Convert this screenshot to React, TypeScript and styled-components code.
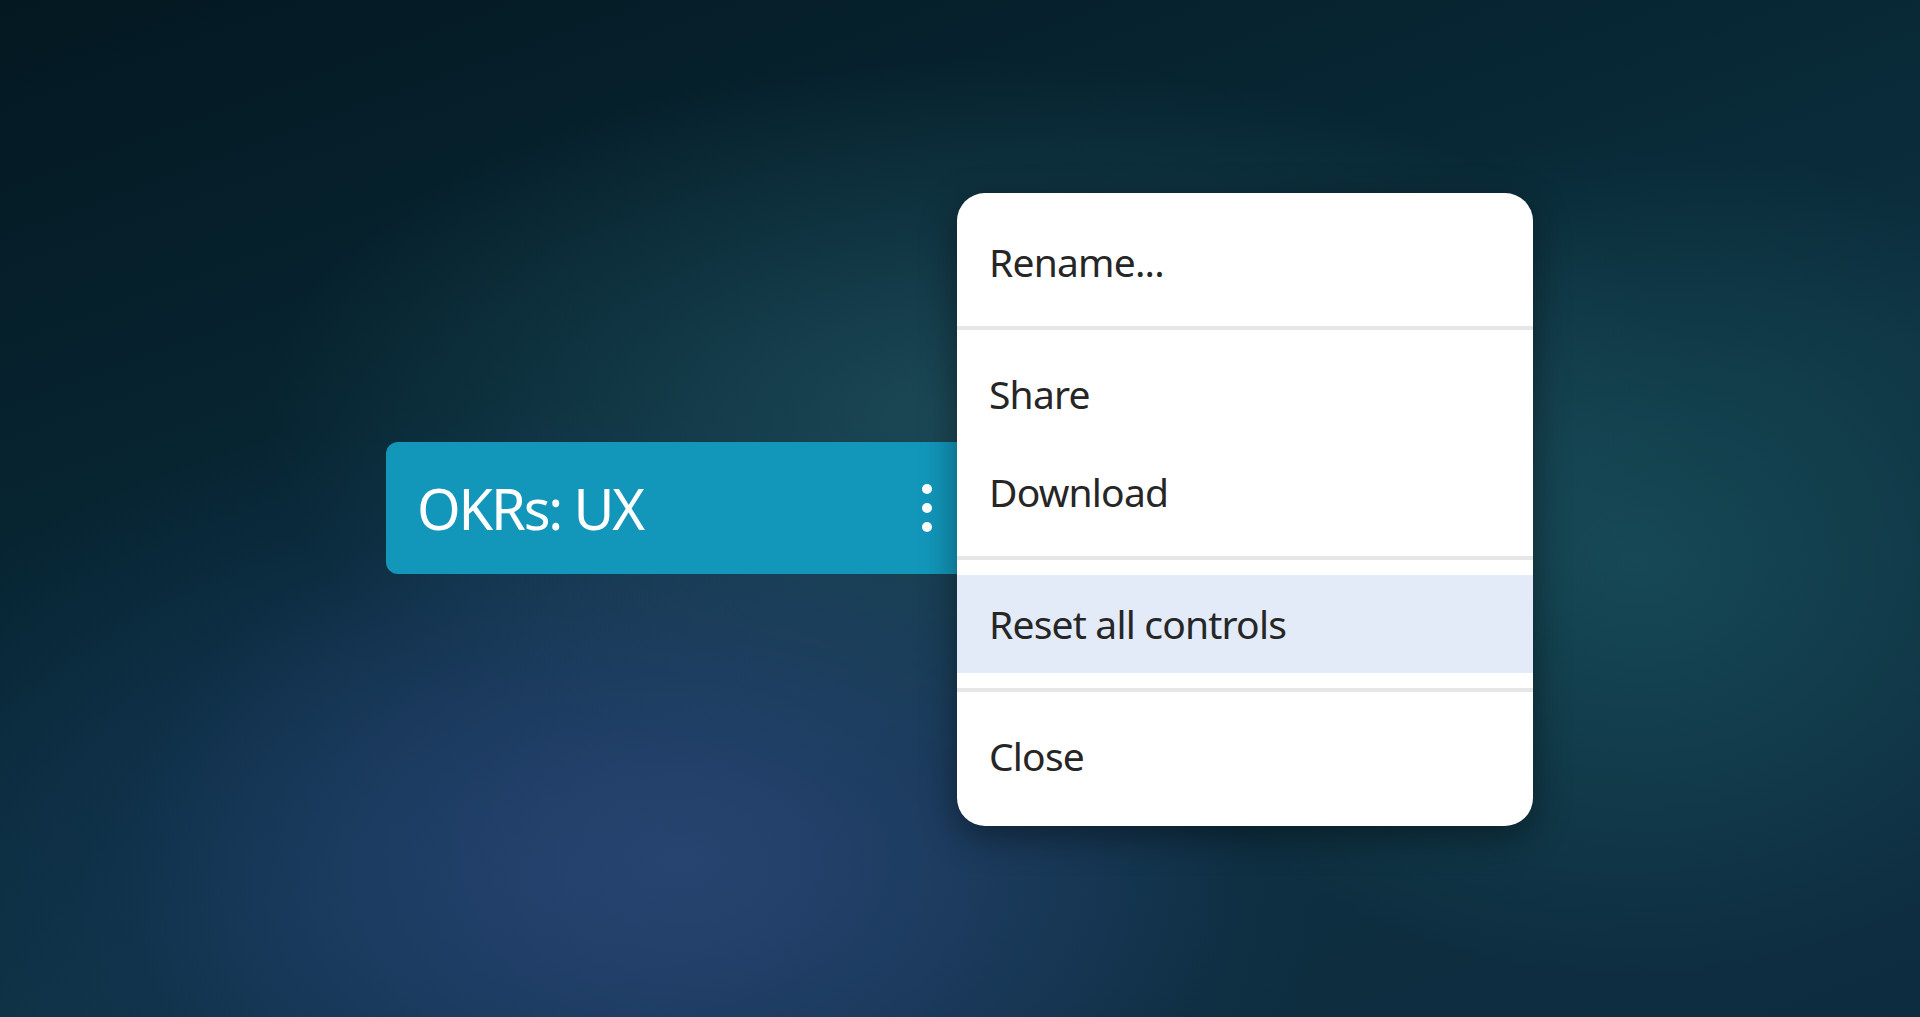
import React from "react";
import styled, { createGlobalStyle } from "styled-components";

const GlobalStyle = createGlobalStyle`
  html, body {
    margin: 0;
    padding: 0;
    height: 100%;
  }
  body {
    font-family: "Noto Sans", "Open Sans", sans-serif;
    background: #061d27;
    overflow: hidden;
  }
`;

const Page = styled.div`
  width: 100vw;
  height: 1017px;
  box-sizing: border-box;
  padding: 442px 0 0 386px;
  background:
    radial-gradient(ellipse 560px 380px at 680px 860px, rgba(42, 70, 116, 0.85), rgba(42, 70, 116, 0) 100%),
    radial-gradient(ellipse 720px 360px at 980px 420px, rgba(36, 86, 100, 0.7), rgba(36, 86, 100, 0) 100%),
    radial-gradient(ellipse 520px 420px at 1640px 560px, rgba(24, 78, 90, 0.8), rgba(24, 78, 90, 0) 100%),
    radial-gradient(ellipse 760px 480px at 560px 880px, rgba(26, 58, 104, 0.75), rgba(26, 58, 104, 0) 100%),
    linear-gradient(160deg, #041821 0%, #072633 35%, #0d3140 60%, #0e2c40 100%);
`;

const Anchor = styled.div`
  position: relative;
  width: 620px;
`;

const TabButton = styled.div`
  height: 132px;
  width: 620px;
  box-sizing: border-box;
  border-radius: 12px;
  background: #1297bb;
  display: flex;
  align-items: center;
  padding-left: 31px;
  color: #ffffff;
`;

const TabTitle = styled.span`
  font-size: 56px;
  letter-spacing: -2.2px;
  font-weight: 400;
  flex: 1;
`;

const Kebab = styled.div`
  width: 10px;
  margin-right: 74px;
  display: flex;
  flex-direction: column;
  align-items: center;
  gap: 9px;
`;

const Dot = styled.span`
  width: 10px;
  height: 10px;
  border-radius: 50%;
  background: #ffffff;
`;

const Menu = styled.div`
  position: absolute;
  left: 571px;
  top: -249px;
  width: 576px;
  box-sizing: border-box;
  padding: 20px 0 21px;
  background: #ffffff;
  border-radius: 28px;
  box-shadow: 0 10px 36px rgba(0, 0, 0, 0.42);
`;

const MenuItem = styled.div<{ $active?: boolean }>`
  height: 98px;
  line-height: 98px;
  padding-left: 32px;
  font-size: 39px;
  letter-spacing: -0.8px;
  color: #262626;
  background: ${(p) => (p.$active ? "#e3eaf8" : "transparent")};
`;

const Separator = styled.div`
  height: 4px;
  margin: 15px 0;
  background: #e6e6e6;
`;

export default function App() {
  return (
    <>
      <GlobalStyle />
      <Page>
        <Anchor>
          <TabButton>
            <TabTitle>OKRs: UX</TabTitle>
            <Kebab>
              <Dot />
              <Dot />
              <Dot />
            </Kebab>
          </TabButton>
          <Menu>
            <MenuItem>Rename...</MenuItem>
            <Separator />
            <MenuItem>Share</MenuItem>
            <MenuItem>Download</MenuItem>
            <Separator />
            <MenuItem $active>Reset all controls</MenuItem>
            <Separator />
            <MenuItem>Close</MenuItem>
          </Menu>
        </Anchor>
      </Page>
    </>
  );
}
